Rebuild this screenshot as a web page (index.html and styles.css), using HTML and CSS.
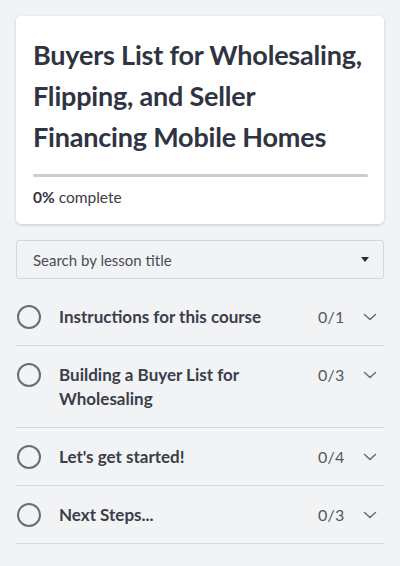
FILE: index.html
```html
<!DOCTYPE html>
<html>
<head>
<meta charset="utf-8">
<link rel="stylesheet" href="styles.css">
</head>
<body>
<div class="page">
  <section class="card">
    <h1 class="title">Buyers List for Wholesaling, Flipping, and Seller Financing Mobile Homes</h1>
    <div class="progress"><div class="progress-fill" style="width:0%"></div></div>
    <p class="complete"><strong>0%</strong> complete</p>
  </section>

  <div class="search">
    <span class="search-text">Search by lesson title</span>
    <span class="caret"></span>
  </div>

  <ul class="lessons">
    <li class="lesson">
      <span class="circle"></span>
      <span class="lesson-title">Instructions for this course</span>
      <span class="count">0/1</span>
      <svg class="chev" viewBox="0 0 14 8" width="14" height="8"><path d="M1.5 1.5 L7 6.5 L12.5 1.5" fill="none" stroke="#6b6f78" stroke-width="1.6" stroke-linecap="round" stroke-linejoin="round"/></svg>
    </li>
    <li class="lesson">
      <span class="circle"></span>
      <span class="lesson-title">Building a Buyer List for Wholesaling</span>
      <span class="count">0/3</span>
      <svg class="chev" viewBox="0 0 14 8" width="14" height="8"><path d="M1.5 1.5 L7 6.5 L12.5 1.5" fill="none" stroke="#6b6f78" stroke-width="1.6" stroke-linecap="round" stroke-linejoin="round"/></svg>
    </li>
    <li class="lesson">
      <span class="circle"></span>
      <span class="lesson-title">Let's get started!</span>
      <span class="count">0/4</span>
      <svg class="chev" viewBox="0 0 14 8" width="14" height="8"><path d="M1.5 1.5 L7 6.5 L12.5 1.5" fill="none" stroke="#6b6f78" stroke-width="1.6" stroke-linecap="round" stroke-linejoin="round"/></svg>
    </li>
    <li class="lesson">
      <span class="circle"></span>
      <span class="lesson-title">Next Steps...</span>
      <span class="count">0/3</span>
      <svg class="chev" viewBox="0 0 14 8" width="14" height="8"><path d="M1.5 1.5 L7 6.5 L12.5 1.5" fill="none" stroke="#6b6f78" stroke-width="1.6" stroke-linecap="round" stroke-linejoin="round"/></svg>
    </li>
  </ul>
</div>
</body>
</html>
```

FILE: styles.css
```css
* { box-sizing: border-box; }
html, body {
  margin: 0;
  padding: 0;
  background: #f2f3f5;
  font-family: "Lato", "Noto Sans", sans-serif;
  color: #2f3441;
}
.page {
  padding: 16px 16px 0;
}
.card {
  background: #ffffff;
  border-radius: 5px;
  box-shadow: 0 1px 3px rgba(0, 0, 0, 0.18);
  padding: 18px 16px 17px 17px;
}
.title {
  margin: 0;
  font-size: 27px;
  line-height: 41px;
  font-weight: 700;
  color: #2f3442;
  letter-spacing: -0.2px;
}
.progress {
  margin-top: 17px;
  height: 3px;
  border-radius: 2px;
  background: #cbccd4;
}
.progress-fill {
  height: 100%;
  background: #4a6cf7;
}
.complete {
  margin: 10px 0 0;
  font-size: 15.5px;
  line-height: 20px;
  color: #3a3e48;
}
.complete strong {
  font-weight: 700;
  color: #2f3442;
}
.search {
  margin-top: 16px;
  height: 39px;
  border: 1px solid #d6d7db;
  border-radius: 3px;
  display: flex;
  align-items: center;
  justify-content: space-between;
  padding: 0 14px 0 16px;
}
.search-text {
  font-size: 15px;
  color: #484c55;
}
.caret {
  width: 0;
  height: 0;
  border-left: 4.5px solid transparent;
  border-right: 4.5px solid transparent;
  border-top: 5px solid #2a2d33;
}
.lessons {
  list-style: none;
  margin: 9px 0 0;
  padding: 0;
}
.lesson {
  display: flex;
  align-items: flex-start;
  border-bottom: 1px solid #d8d9dc;
  padding: 17px 0 16px 1px;
}
.circle {
  flex: none;
  width: 24px;
  height: 24px;
  border: 2px solid #6a6d73;
  border-radius: 50%;
}
.lesson-title {
  flex: 1;
  margin-left: 18px;
  font-size: 17px;
  line-height: 24px;
  font-weight: 700;
  color: #3a3e4a;
  padding-right: 30px;
}
.count {
  flex: none;
  font-size: 16px;
  line-height: 24px;
  color: #545862;
  letter-spacing: 0.3px;
  width: 45px;
}
.chev {
  flex: none;
  margin-top: 8px;
  margin-right: 7px;
}
```
